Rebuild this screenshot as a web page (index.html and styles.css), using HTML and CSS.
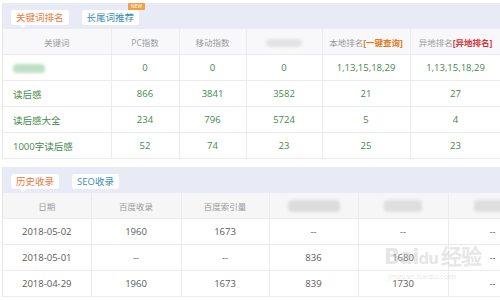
FILE: index.html
```html
<!DOCTYPE html>
<html lang="zh-CN">
<head>
    <meta charset="UTF-8">
    <title>关键词排名</title>
    <link rel="stylesheet" href="styles.css">
</head>
<body>
    <div class="panel">
        <div class="tabs">
            <span class="tab tab-on">关键词排名</span>
            <span class="tab tab-blue">长尾词推荐<em class="badge">NEW</em></span>
        </div>
        <table class="grid rank">
            <colgroup>
                <col style="width: 108px">
                <col style="width: 68px">
                <col style="width: 67px">
                <col style="width: 76px">
                <col style="width: 88px">
                <col style="width: 91px">
            </colgroup>
            <thead>
                <tr>
                    <th>关键词</th>
                    <th>PC指数</th>
                    <th>移动指数</th>
                    <th><span class="blur blur-gray"></span></th>
                    <th>本地排名<b class="link-orange">[一键查询]</b></th>
                    <th>异地排名<b class="link-red">[异地排名]</b></th>
                </tr>
            </thead>
            <tbody>
                <tr>
                    <td class="kw"><span class="blur blur-green"></span></td>
                    <td>0</td><td>0</td><td>0</td>
                    <td>1,13,15,18,29</td><td>1,13,15,18,29</td>
                </tr>
                <tr>
                    <td class="kw">读后感</td>
                    <td>866</td><td>3841</td><td>3582</td><td>21</td><td>27</td>
                </tr>
                <tr>
                    <td class="kw">读后感大全</td>
                    <td>234</td><td>796</td><td>5724</td><td>5</td><td>4</td>
                </tr>
                <tr>
                    <td class="kw">1000字读后感</td>
                    <td>52</td><td>74</td><td>23</td><td>25</td><td>23</td>
                </tr>
            </tbody>
        </table>
    </div>

    <div class="panel panel-history">
        <div class="tabs">
            <span class="tab tab-on">历史收录</span>
            <span class="tab tab-blue">SEO收录</span>
        </div>
        <table class="grid history">
            <colgroup>
                <col style="width: 88px">
                <col style="width: 90px">
                <col style="width: 88px">
                <col style="width: 89px">
                <col style="width: 90px">
                <col style="width: 89px">
            </colgroup>
            <thead>
                <tr>
                    <th>日期</th>
                    <th>百度收录</th>
                    <th>百度索引量</th>
                    <th><span class="blur blur-wide"></span></th>
                    <th><span class="blur blur-mid"></span></th>
                    <th><span class="blur blur-mid"></span></th>
                </tr>
            </thead>
            <tbody>
                <tr>
                    <td>2018-05-02</td><td>1960</td><td>1673</td><td>--</td><td>--</td><td>--</td>
                </tr>
                <tr>
                    <td>2018-05-01</td><td>--</td><td>--</td><td>836</td><td>1680</td><td>--</td>
                </tr>
                <tr>
                    <td>2018-04-29</td><td>1960</td><td>1673</td><td>839</td><td>1730</td><td>--</td>
                </tr>
            </tbody>
        </table>
        <div class="watermark">
            <span class="wm-logo">Bai<i>du</i>经验</span>
            <span class="wm-url">jingyan.baidu.com</span>
        </div>
    </div>
</body>
</html>
```

FILE: styles.css
```css
body {
    margin: 0;
    width: 500px;
    height: 300px;
    overflow: hidden;
    background-color: #fff;
    font-family: "Open Sans", "Noto Sans CJK SC", sans-serif;
    font-size: 9.5px;
}

.panel {
    margin-top: 3px;
    margin-left: 2px;
    width: 560px;
    border-left: 1px solid #e6e6e6;
}

.panel-history {
    position: relative;
    margin-top: 8px;
}

.tabs {
    display: flex;
    align-items: flex-end;
    gap: 13px;
    height: 26px;
    padding: 0 0 4px 8px;
    box-sizing: border-box;
    background-color: #e8ebf5;
}

.tab {
    position: relative;
    height: 15px;
    line-height: 15px;
    padding: 0 5px;
    font-size: 9.5px;
    background-color: #fff;
    border-radius: 3px;
    color: #3b8db5;
}

.tab-on {
    color: #e8793f;
}

.tab-on::after {
    content: "";
    position: absolute;
    left: 9px;
    bottom: -3px;
    border-left: 3px solid transparent;
    border-right: 3px solid transparent;
    border-top: 3px solid #fff;
}

.badge {
    position: absolute;
    top: -7px;
    right: -6px;
    width: 17px;
    height: 7px;
    line-height: 7px;
    font-size: 5px;
    font-style: normal;
    text-align: center;
    color: #fff;
    background-color: #f2a044;
    border-radius: 1px;
}

.grid {
    border-collapse: collapse;
    table-layout: fixed;
}

.grid th, .grid td {
    height: 25px;
    padding: 0;
    text-align: center;
    white-space: nowrap;
    border-right: 1px solid #ebebeb;
    border-bottom: 1px solid #ebebeb;
}

.grid th {
    font-size: 8.5px;
    font-weight: normal;
    color: #9a9a9a;
    background-color: #f8f8fa;
}

.rank td {
    color: #3f8a4a;
}

.rank td.kw {
    text-align: left;
    padding-left: 10px;
}

.history th {
    background-color: #f6f6f6;
}

.history td {
    color: #5a5a5a;
}

.link-orange {
    color: #e07a22;
}

.link-red {
    color: #d2363a;
}

.blur {
    display: inline-block;
    vertical-align: middle;
    border-radius: 4px;
    filter: blur(1.5px);
}

.blur-gray {
    width: 36px;
    height: 8px;
    background-color: #e2e2e2;
}

.blur-green {
    width: 32px;
    height: 9px;
    background-color: #bfdfc6;
}

.blur-wide {
    width: 52px;
    height: 12px;
    background-color: #dcdcdc;
}

.blur-mid {
    width: 38px;
    height: 12px;
    background-color: #dedede;
}

.watermark {
    position: absolute;
    left: 381px;
    top: 78px;
    display: flex;
    flex-direction: column;
    align-items: flex-start;
    color: rgba(200, 200, 200, 0.45);
    pointer-events: none;
}

.wm-logo {
    font-family: "DejaVu Sans", sans-serif;
    font-size: 21px;
    font-weight: bold;
    line-height: 24px;
    letter-spacing: -1px;
}

.wm-logo i {
    font-style: normal;
    font-size: 15px;
    margin-right: 3px;
}

.wm-url {
    margin-left: 4px;
    font-size: 8px;
    line-height: 10px;
}
```
